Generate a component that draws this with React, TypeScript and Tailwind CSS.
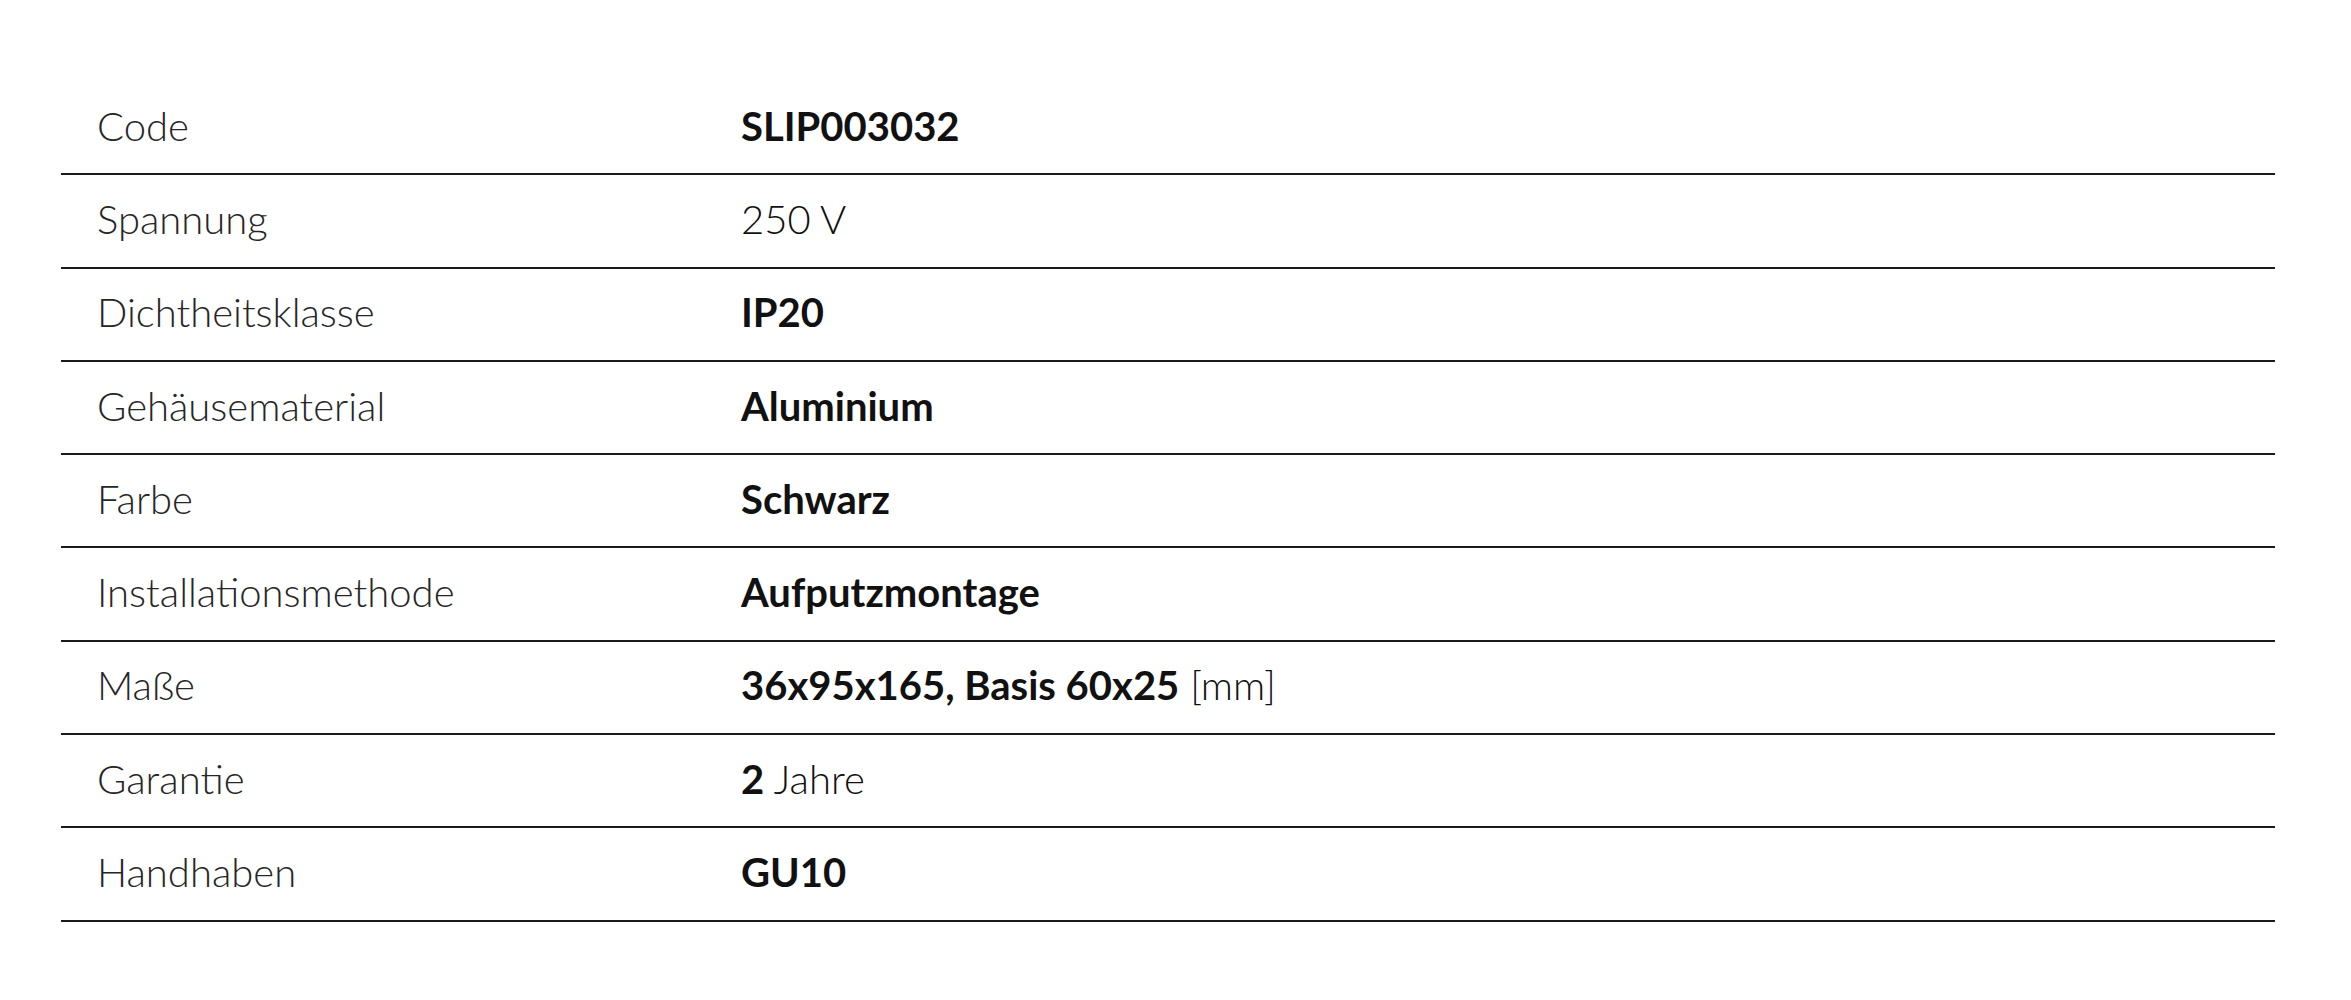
import React from "react"

const rows: { label: string; value: React.ReactNode }[] = [
  { label: "Code", value: <b className="font-bold">SLIP003032</b> },
  { label: "Spannung", value: <span>250 V</span> },
  { label: "Dichtheitsklasse", value: <b className="font-bold">IP20</b> },
  { label: "Gehäusematerial", value: <b className="font-bold">Aluminium</b> },
  { label: "Farbe", value: <b className="font-bold">Schwarz</b> },
  { label: "Installationsmethode", value: <b className="font-bold">Aufputzmontage</b> },
  {
    label: "Maße",
    value: (
      <>
        <b className="font-bold">36x95x165, Basis 60x25</b> [mm]
      </>
    ),
  },
  {
    label: "Garantie",
    value: (
      <>
        <b className="font-bold">2</b> Jahre
      </>
    ),
  },
  { label: "Handhaben", value: <b className="font-bold">GU10</b> },
]

export default function App() {
  return (
    <div className="min-h-screen bg-white pt-[82px] font-['Lato',sans-serif]">
      <div className="mx-[61px] w-[2214px]">
        {rows.map((r) => (
          <div
            key={r.label}
            className="grid h-[93.3px] grid-cols-[680px_1fr] items-center border-b-2 border-[#1a1a1a] pb-[4px] leading-none"
          >
            <div className="pl-[36px] text-[40px] font-light text-[#262626]">{r.label}</div>
            <div className="text-[40px] font-light text-[#111]">{r.value}</div>
          </div>
        ))}
      </div>
    </div>
  )
}
